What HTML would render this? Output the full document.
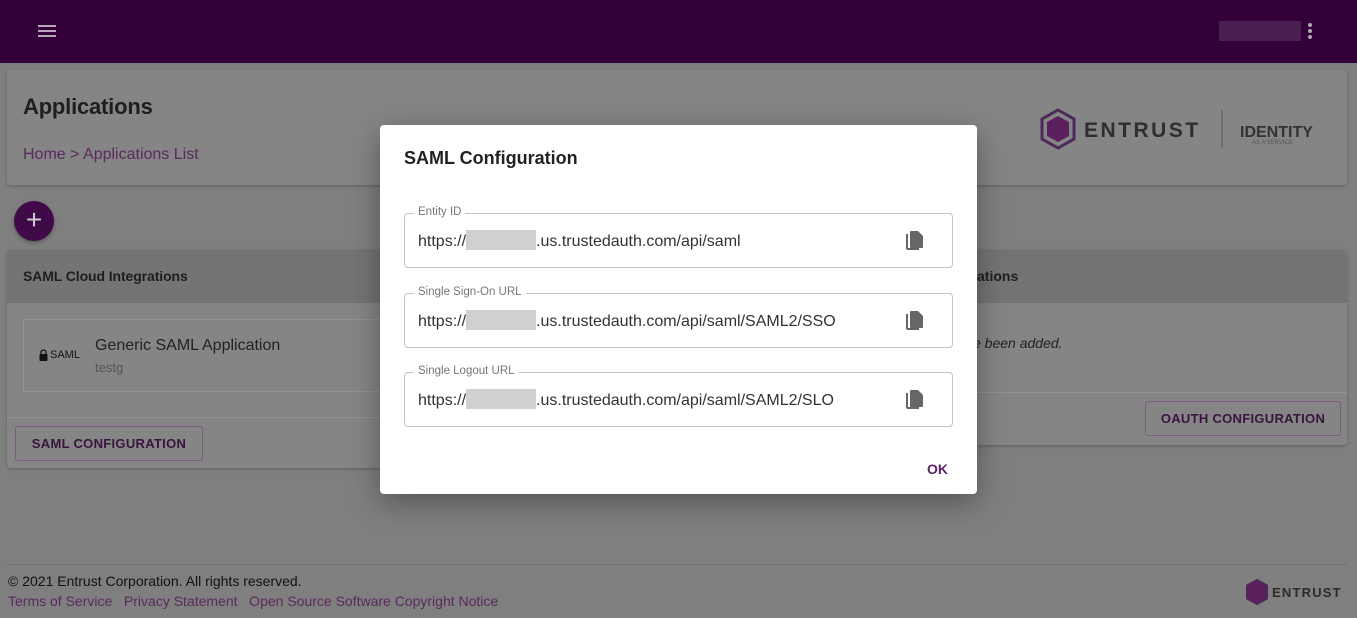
<!DOCTYPE html>
<html><head><meta charset="utf-8"><style>
*{box-sizing:border-box;margin:0;padding:0}
body{width:1357px;height:618px;overflow:hidden;background:#7f7f7f;font-family:"Liberation Sans",sans-serif;position:relative}
.abs{position:absolute}
.hdr{left:0;top:0;width:1357px;height:63px;background:#33003a}
.card{background:#858585;border-radius:4px;box-shadow:0 1px 3px rgba(0,0,0,.25)}
.btn{border:1px solid #7d5a80;border-radius:3px;color:#3a1440;font-weight:bold;font-size:13px;letter-spacing:.3px;display:flex;align-items:center;justify-content:center}
.dlg{left:380px;top:125px;width:597px;height:369px;background:#fff;border-radius:4px;box-shadow:0 8px 30px rgba(0,0,0,.35)}
.fld{position:absolute;left:24px;width:549px;height:55px;border:1px solid #c4c4c4;border-radius:4px}
.fld .lb{position:absolute;left:9px;top:-8px;background:#fff;padding:0 4px;font-size:11.5px;color:#777}
.fld .v{position:absolute;left:13px;top:16px;font-size:16px;color:#333;white-space:nowrap}
.blur{display:inline-block;width:70px;height:20px;background:#d0d0d0;vertical-align:-4px}
.cp{position:absolute;right:27px;top:16px}
</style></head><body>
<div class="abs hdr"></div>
<div class="abs" style="left:38px;top:25px;width:18px;height:2px;background:#b7a6ba;box-shadow:0 5px 0 #b7a6ba,0 10px 0 #b7a6ba"></div>
<div class="abs" style="left:1219px;top:21px;width:82px;height:20px;background:#4a1f51"></div>
<div class="abs" style="left:1308px;top:23px;width:4px;height:4px;border-radius:2px;background:#aaa;box-shadow:0 6px 0 #aaa,0 12px 0 #aaa"></div>

<div class="abs card" style="left:7px;top:70px;width:1340px;height:115px"></div>
<div class="abs" style="left:23px;top:94px;font-size:22px;font-weight:bold;color:#1e1e1e;letter-spacing:-.2px">Applications</div>
<div class="abs" style="left:23px;top:146px;font-size:16px;color:#5a2a5e">Home &gt; Applications List</div>
<svg class="abs" style="left:1040px;top:108px" width="290" height="42" viewBox="0 0 290 42">
<polygon points="18,2 34,11 34,31 18,40 2,31 2,11" fill="none" stroke="#4b2a5a" stroke-width="3"/>
<polygon points="18,8 29,14 29,28 18,34 7,28 7,14" fill="#5c1f5e"/>
<text x="44" y="29" font-family="Liberation Sans" font-weight="bold" font-size="21" letter-spacing="2.5" fill="#2f2f2f">ENTRUST</text>
<line x1="182" y1="2" x2="182" y2="40" stroke="#6c4d6e" stroke-width="1"/>
<text x="200" y="29" font-family="Liberation Sans" font-weight="bold" font-size="16" fill="#333">IDENTITY</text>
<text x="212" y="36" font-family="Liberation Sans" font-size="6" fill="#555">AS A SERVICE</text>
</svg>

<div class="abs" style="left:14px;top:201px;width:40px;height:40px;border-radius:50%;background:#3f0a47;box-shadow:0 2px 4px rgba(0,0,0,.3);color:#ccc;font-size:28px;line-height:38px;text-align:center">+</div>

<div class="abs card" style="left:7px;top:250px;width:670px;height:218px"></div>
<div class="abs" style="left:7px;top:250px;width:670px;height:53px;background:#747474;border-radius:4px 4px 0 0"></div>
<div class="abs" style="left:23px;top:268px;font-size:14px;font-weight:bold;color:#1e1e1e;letter-spacing:-.1px">SAML Cloud Integrations</div>
<div class="abs" style="left:23px;top:319px;width:660px;height:73px;border:1px solid #929292"></div>
<svg class="abs" style="left:39px;top:349px" width="9" height="12" viewBox="0 0 9 12"><path d="M2 5V3.5a2.5 2.5 0 0 1 5 0V5" fill="none" stroke="#111" stroke-width="1.3"/><rect x="0.5" y="5" width="8" height="7" rx="1" fill="#111"/></svg>
<div class="abs" style="left:50px;top:349px;font-size:11px;color:#111">SAML</div>
<div class="abs" style="left:95px;top:337px;font-size:16px;color:#222">Generic SAML Application</div>
<div class="abs" style="left:95px;top:360px;font-size:13px;color:#555">testg</div>
<div class="abs" style="left:7px;top:417px;width:670px;height:1px;background:#929292"></div>
<div class="abs btn" style="left:15px;top:426px;width:188px;height:35px">SAML CONFIGURATION</div>

<div class="abs card" style="left:681px;top:250px;width:666px;height:195px"></div>
<div class="abs" style="left:681px;top:250px;width:666px;height:53px;background:#747474;border-radius:4px 4px 0 0"></div>
<div class="abs" style="left:977px;top:268px;font-size:14px;font-weight:bold;color:#1e1e1e">ations</div>
<div class="abs" style="left:973px;top:335px;font-size:14px;font-style:italic;color:#222">e been added.</div>
<div class="abs" style="left:681px;top:392px;width:666px;height:1px;background:#929292"></div>
<div class="abs btn" style="left:1145px;top:401px;width:196px;height:35px">OAUTH CONFIGURATION</div>

<div class="abs" style="left:7px;top:564px;width:1340px;height:1px;background:#707070"></div>
<div class="abs" style="left:8px;top:573px;font-size:14px;color:#111">© 2021 Entrust Corporation. All rights reserved.</div>
<div class="abs" style="left:8px;top:593px;font-size:14px;color:#5a2a5e">Terms of Service&nbsp;&nbsp; Privacy Statement&nbsp;&nbsp; Open Source Software Copyright Notice</div>
<svg class="abs" style="left:1246px;top:579px" width="104" height="26"><polygon points="11,1 21,6.5 21,19.5 11,25 1,19.5 1,6.5" fill="#5c1f5e" stroke="#4b2a5a" stroke-width="2"/><text x="26" y="18" font-family="Liberation Sans" font-weight="bold" font-size="13" letter-spacing="1.2" fill="#2b2b2b">ENTRUST</text></svg>

<div class="abs dlg">
<div class="abs" style="left:24px;top:23px;font-size:18px;font-weight:bold;color:#222">SAML Configuration</div>
<div class="fld" style="top:88px"><span class="lb">Entity ID</span><span class="v">https://<span class="blur"></span>.us.trustedauth.com/api/saml</span><svg class="cp" width="20" height="22" viewBox="0 0 20 22"><path d="M1 4h2v14h11v2H3a2 2 0 0 1-2-2z" fill="#666"/><path d="M6 1h7l5 5v11a1 1 0 0 1-1 1H6a1 1 0 0 1-1-1V2a1 1 0 0 1 1-1z" fill="#666"/></svg></div>
<div class="fld" style="top:168px"><span class="lb">Single Sign-On URL</span><span class="v">https://<span class="blur"></span>.us.trustedauth.com/api/saml/SAML2/SSO</span><svg class="cp" width="20" height="22" viewBox="0 0 20 22"><path d="M1 4h2v14h11v2H3a2 2 0 0 1-2-2z" fill="#666"/><path d="M6 1h7l5 5v11a1 1 0 0 1-1 1H6a1 1 0 0 1-1-1V2a1 1 0 0 1 1-1z" fill="#666"/></svg></div>
<div class="fld" style="top:247px"><span class="lb">Single Logout URL</span><span class="v">https://<span class="blur"></span>.us.trustedauth.com/api/saml/SAML2/SLO</span><svg class="cp" width="20" height="22" viewBox="0 0 20 22"><path d="M1 4h2v14h11v2H3a2 2 0 0 1-2-2z" fill="#666"/><path d="M6 1h7l5 5v11a1 1 0 0 1-1 1H6a1 1 0 0 1-1-1V2a1 1 0 0 1 1-1z" fill="#666"/></svg></div>
<div class="abs" style="left:547px;top:336px;font-size:14px;font-weight:bold;color:#5a1f66">OK</div>
</div>
</body></html>
